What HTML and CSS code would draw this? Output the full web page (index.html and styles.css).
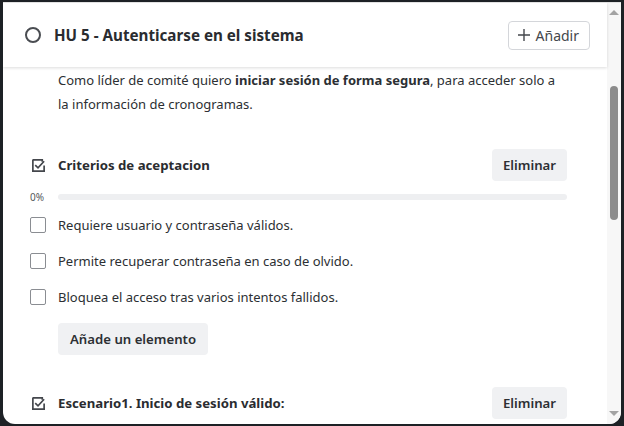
FILE: index.html
```html
<!DOCTYPE html>
<html lang="es">
<head>
<meta charset="utf-8">
<link rel="stylesheet" href="styles.css">
</head>
<body>
<div class="modal">
  <div class="content">
    <header class="header">
      <span class="circle"></span>
      <h1 class="title">HU 5 - Autenticarse en el sistema</h1>
      <button class="add-btn"><svg width="14" height="14" viewBox="0 0 14 14"><path d="M7 1v12M1 7h12" stroke="#44474c" stroke-width="1.4" fill="none"/></svg>Añadir</button>
    </header>
    <div class="body">
      <p class="desc">Como líder de comité quiero <b>iniciar sesión de forma segura</b>, para acceder solo a la información de cronogramas.</p>

      <div class="section-head">
        <svg class="sec-icon" width="15" height="15" viewBox="0 0 16 16"><path d="M2 2h10v2" fill="none" stroke="#44474c" stroke-width="1.8"/><path d="M2 1.5v12.5h12v-6" fill="none" stroke="#44474c" stroke-width="1.8"/><path d="M4.5 7.5l3 3 6.5-7" fill="none" stroke="#44474c" stroke-width="1.8"/></svg>
        <h2 class="sec-title">Criterios de aceptacion</h2>
        <button class="gray-btn">Eliminar</button>
      </div>

      <div class="progress">
        <span class="pct">0%</span>
        <div class="bar"></div>
      </div>

      <ul class="items">
        <li class="item"><span class="box"></span>Requiere usuario y contraseña válidos.</li>
        <li class="item"><span class="box"></span>Permite recuperar contraseña en caso de olvido.</li>
        <li class="item"><span class="box"></span>Bloquea el acceso tras varios intentos fallidos.</li>
      </ul>

      <button class="gray-btn add-item">Añade un elemento</button>

      <div class="section-head second">
        <svg class="sec-icon" width="15" height="15" viewBox="0 0 16 16"><path d="M2 2h10v2" fill="none" stroke="#44474c" stroke-width="1.8"/><path d="M2 1.5v12.5h12v-6" fill="none" stroke="#44474c" stroke-width="1.8"/><path d="M4.5 7.5l3 3 6.5-7" fill="none" stroke="#44474c" stroke-width="1.8"/></svg>
        <h2 class="sec-title">Escenario1. Inicio de sesión válido:</h2>
        <button class="gray-btn">Eliminar</button>
      </div>
    </div>
  </div>
  <div class="scrollbar">
    <span class="arrow up"></span>
    <span class="thumb"></span>
    <span class="track-fill"></span>
    <span class="arrow down"></span>
  </div>
</div>
</body>
</html>
```

FILE: styles.css
```css
* { box-sizing: border-box; }
html, body { margin: 0; padding: 0; }
body {
  background: #1d2125;
  width: 624px;
  height: 426px;
  overflow: hidden;
  font-family: "Noto Sans", "Open Sans", sans-serif;
  color: #2c2f33;
}
.modal {
  margin-left: 3px;
  margin-top: 2px;
  width: 618px;
  height: 422px;
  background: #fff;
  border-top: 1px solid #e2e2e2;
  border-radius: 0 0 12px 12px;
  overflow: hidden;
  display: flex;
}
.content {
  flex: 1;
  display: flex;
  flex-direction: column;
  min-width: 0;
}
.header {
  height: 64px;
  display: flex;
  align-items: center;
  padding: 0 17px 0 22px;
  box-shadow: 0 1px 3px rgba(0,0,0,0.14);
  position: relative;
}
.circle {
  width: 16px;
  height: 16px;
  border: 2px solid #4a4d52;
  border-radius: 50%;
  flex: none;
}
.title {
  margin: 0 0 0 13px;
  font-size: 15.2px;
  font-weight: 700;
  flex: 1;
  color: #2a2c30;
}
.add-btn {
  display: flex;
  align-items: center;
  gap: 5px;
  height: 29px;
  padding: 0 10px 0 8px;
  background: #fff;
  border: 1px solid #d4d6da;
  border-radius: 4px;
  font-family: inherit;
  font-size: 14px;
  color: #44474c;
}
.body {
  padding: 1px 40px 0 27px;
}
.desc {
  margin: 0 0 0 28px;
  font-size: 13px;
  line-height: 24px;
  color: #2c2f33;
}
.desc b { font-weight: 700; }
.section-head {
  display: flex;
  align-items: center;
  height: 32px;
  margin-top: 33px;
}
.section-head.second { margin-top: 32px; }
.sec-icon { margin-left: 1px; flex: none; }
.sec-title {
  margin: 0 0 0 12px;
  flex: 1;
  font-size: 13.2px;
  font-weight: 700;
  color: #2a2c30;
}
.gray-btn {
  height: 32px;
  padding: 0 11px;
  background: #f0f1f3;
  border: none;
  border-radius: 4px;
  font-family: inherit;
  font-size: 13.2px;
  font-weight: 600;
  color: #2c2f33;
}
.progress {
  display: flex;
  align-items: center;
  height: 16px;
  margin-top: 8px;
}
.pct {
  width: 28px;
  font-size: 10px;
  color: #55585c;
}
.bar {
  flex: 1;
  height: 6px;
  border-radius: 3px;
  background: #eeeff1;
}
.items {
  list-style: none;
  margin: 2px 0 0;
  padding: 0;
}
.item {
  height: 36px;
  display: flex;
  align-items: center;
  font-size: 13px;
  color: #2c2f33;
}
.box {
  width: 16px;
  height: 16px;
  border: 1px solid #8a8d92;
  border-radius: 2px;
  margin: 0 12px 0 0;
  flex: none;
}
.add-item {
  margin: 8px 0 0 28px;
  padding: 0 12px;
}
.scrollbar {
  width: 14px;
  flex: none;
  background: #f7f7f7;
  display: flex;
  flex-direction: column;
  align-items: center;
}
.arrow {
  width: 0;
  height: 0;
  border-left: 5px solid transparent;
  border-right: 5px solid transparent;
  flex: none;
}
.arrow.up {
  border-bottom: 5px solid #a3a3a3;
  margin-top: 7px;
}
.arrow.down {
  border-top: 5px solid #a3a3a3;
  margin-bottom: 8px;
}
.thumb {
  width: 8px;
  height: 134px;
  margin-top: 71px;
  border-radius: 4px;
  background: #8c8c8c;
  flex: none;
}
.track-fill { flex: 1; }
```
